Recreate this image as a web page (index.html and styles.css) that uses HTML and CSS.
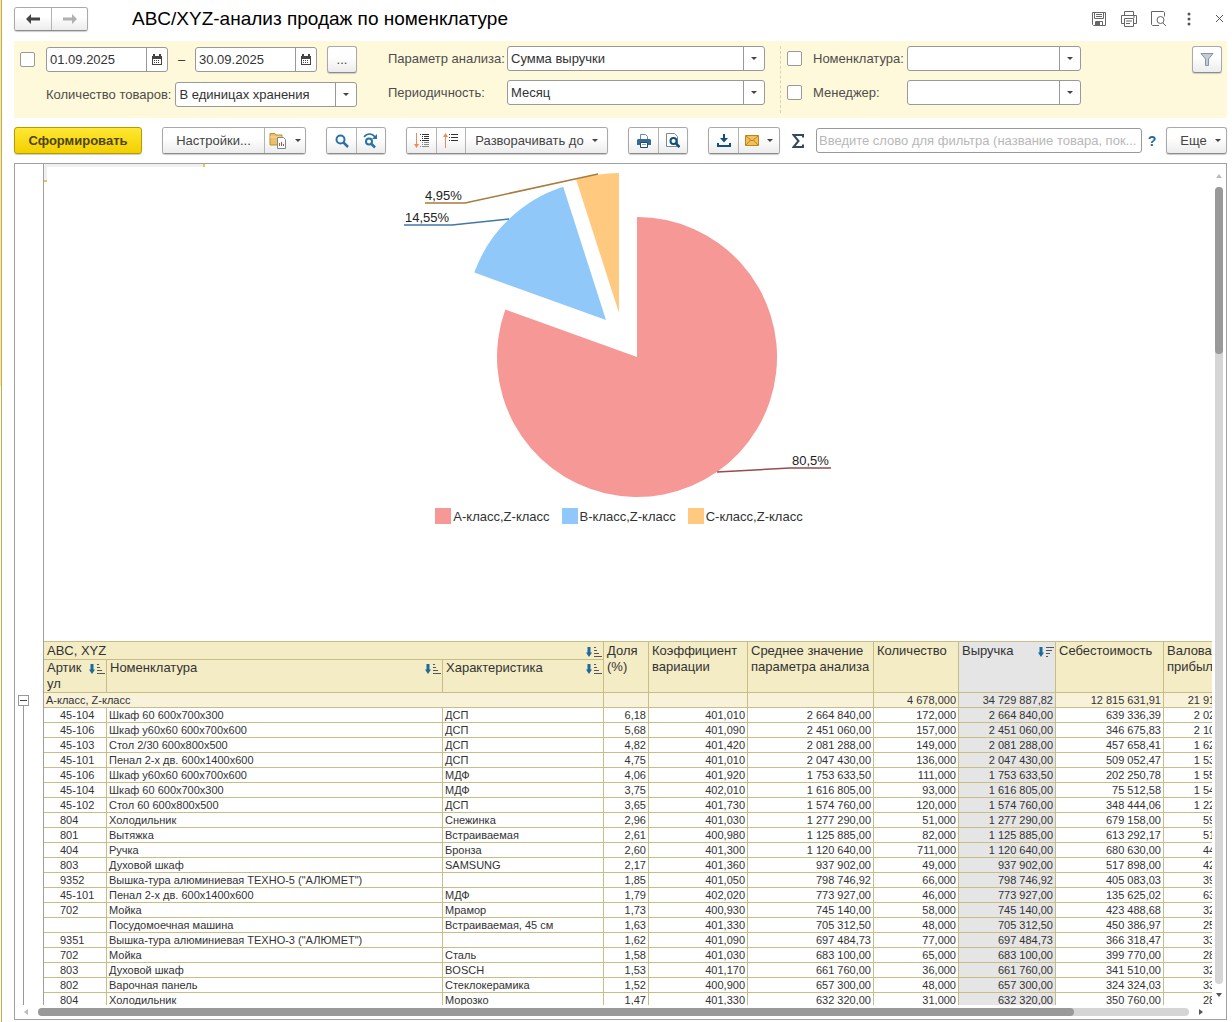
FILE: index.html
```html
<!DOCTYPE html>
<html lang="ru">
<head>
    <meta charset="UTF-8">
    <meta name="viewport" content="width=device-width, initial-scale=1.0">
    <title>ABC/XYZ-анализ продаж по номенклатуре</title>
    <link rel="stylesheet" href="styles.css">
</head>
<body>
    <!-- Значки сортировки, используются в шапке таблицы -->
    <svg class="defs" aria-hidden="true">
        <symbol id="sort-asc" viewBox="0 0 16 10">
            <path d="M1.500 0h3v5.500H6L3 10 0 5.500h1.500z" fill="#1c6a9c"/>
            <path d="M8 0.5h2M8 3.5h3M8 6.5h5M8 9.5h8" stroke="#555"/>
        </symbol>
        <symbol id="sort-desc" viewBox="0 0 16 10">
            <path d="M1.500 0h3v5.500H6L3 10 0 5.500h1.500z" fill="#1c6a9c"/>
            <path d="M8 0.5h8M8 3.5h6M8 6.5h4M8 9.5h2" stroke="#555"/>
        </symbol>
    </svg>

    <div class="side"></div>

    <main class="window">
        <header class="title-bar">
            <div class="group nav">
                <button class="btn" aria-label="Назад">
                    <svg width="14" height="10"><path d="M5 0v3.500h9v3H5V10L0 5z" fill="#444"/></svg>
                </button>
                <button class="btn" aria-label="Вперед">
                    <svg width="14" height="10"><path d="M9 0v3.500H0v3h9V10l5-5z" fill="#b0b0b0"/></svg>
                </button>
            </div>
            <h1>ABC/XYZ-анализ продаж по номенклатуре</h1>
            <div class="window-tools">
                <button aria-label="Сохранить">
                    <svg width="16" height="16" fill="none" stroke="#666"><path d="M1.500 1.500h13v13h-12l-1-1zM3.500 1.500v6h9v-6M5 3.500h6M5 5.500h6M4.500 14.500v-4h7v4"/><path d="M5 11h4v3H5z" fill="#666" stroke="none"/></svg>
                </button>
                <button aria-label="Печать">
                    <svg width="16" height="16" fill="none" stroke="#666"><path d="M3.500 4.500v-4h9v4M3.500 12.500h-3v-8h15v8h-3M3.500 7.500h9v8h-9zM5 10h6M5 12.500h4M12 6h2"/></svg>
                </button>
                <button aria-label="Просмотр">
                    <svg width="16" height="16" fill="none" stroke="#666"><path d="M8 14.500H1.500l-1-1V.5h12l1 1v4M12 12l3 3"/><circle cx="9.500" cy="9" r="3.500"/></svg>
                </button>
                <button aria-label="Меню">
                    <svg width="16" height="16" fill="#555"><circle cx="8" cy="3" r="1.500"/><circle cx="8" cy="8" r="1.500"/><circle cx="8" cy="13" r="1.500"/></svg>
                </button>
                <button aria-label="Закрыть">
                    <svg width="16" height="16" stroke="#555"><path d="M5 4l7 7M12 4l-7 7"/></svg>
                </button>
            </div>
        </header>

        <!-- Быстрые отборы -->
        <section class="filters">
            <div class="filter-col period">
                <div class="row">
                    <input type="checkbox" aria-label="Период">
                    <div class="field date">
                        <input type="text" value="01.09.2025" aria-label="Начало периода">
                        <button class="drop" aria-label="Выбрать дату">
                            <svg width="10" height="11"><path d="M0 2h10v9H0z" fill="#444"/><path d="M1 5h8v5H1z" fill="#fff"/><path d="M2 0v2M8 0v2" stroke="#444" stroke-width="2"/><path d="M2 6.500h1m1 0h1m1 0h1M2 8.500h1m1 0h1m1 0h1" stroke="#444"/></svg>
                        </button>
                    </div>
                    <span class="dash">–</span>
                    <div class="field date">
                        <input type="text" value="30.09.2025" aria-label="Конец периода">
                        <button class="drop" aria-label="Выбрать дату">
                            <svg width="10" height="11"><path d="M0 2h10v9H0z" fill="#444"/><path d="M1 5h8v5H1z" fill="#fff"/><path d="M2 0v2M8 0v2" stroke="#444" stroke-width="2"/><path d="M2 6.500h1m1 0h1m1 0h1M2 8.500h1m1 0h1m1 0h1" stroke="#444"/></svg>
                        </button>
                    </div>
                    <button class="btn single more">...</button>
                </div>
                <div class="row units">
                    <label for="units">Количество товаров:</label>
                    <div class="field">
                        <select id="units"><option>В единицах хранения</option></select>
                        <span class="drop"><i class="caret"></i></span>
                    </div>
                </div>
            </div>

            <div class="filter-col params">
                <div class="row">
                    <label for="param">Параметр анализа:</label>
                    <div class="field">
                        <select id="param"><option>Сумма выручки</option></select>
                        <span class="drop"><i class="caret"></i></span>
                    </div>
                </div>
                <div class="row">
                    <label for="step">Периодичность:</label>
                    <div class="field">
                        <select id="step"><option>Месяц</option></select>
                        <span class="drop"><i class="caret"></i></span>
                    </div>
                </div>
            </div>

            <div class="filter-col refs">
                <div class="row">
                    <input type="checkbox" id="use-item">
                    <label for="use-item">Номенклатура:</label>
                    <div class="field">
                        <select aria-label="Номенклатура"><option></option></select>
                        <span class="drop"><i class="caret"></i></span>
                    </div>
                </div>
                <div class="row">
                    <input type="checkbox" id="use-manager">
                    <label for="use-manager">Менеджер:</label>
                    <div class="field">
                        <select aria-label="Менеджер"><option></option></select>
                        <span class="drop"><i class="caret"></i></span>
                    </div>
                </div>
            </div>

            <button class="btn single funnel" aria-label="Отбор">
                <svg width="14" height="13"><path d="M1 .5h12L8.500 6v6.500h-3V6z" fill="#c3ccd4" stroke="#8496a5"/></svg>
            </button>
        </section>

        <!-- Командная панель -->
        <section class="toolbar">
            <button class="btn single run">Сформировать</button>

            <div class="group">
                <button class="btn settings">Настройки...</button>
                <button class="btn variants" aria-label="Варианты">
                    <svg width="18" height="17"><path d="M1 3V1.500h5L7 3h6v10H1z" fill="#ecc068" stroke="#c08d30"/><path d="M1 5h12" stroke="#f8dfa0"/><path d="M8.500 5.500h6l2 2v9h-8z" fill="#fff" stroke="#7a8894"/><path d="M10.500 14v-3" stroke="#3a9a4a"/><path d="M12.500 14v-4" stroke="#d04030"/><path d="M14.500 14v-2" stroke="#d04030"/></svg>
                    <i class="caret"></i>
                </button>
            </div>

            <div class="group">
                <button class="btn icon" aria-label="Найти">
                    <svg width="14" height="14" fill="none" stroke="#2a72a4"><circle cx="5.500" cy="5.500" r="4" stroke-width="2"/><path d="M8.500 8.500l4.500 4.500" stroke-width="2.500"/></svg>
                </button>
                <button class="btn icon" aria-label="Найти далее">
                    <svg width="16" height="16" fill="none" stroke="#2a72a4"><circle cx="6" cy="8.500" r="3" stroke-width="2"/><path d="M8.500 11l3.500 3.500" stroke-width="2.500"/><path d="M1 4c3-4 8-4 11 0" stroke-width="1.500"/><path d="M14 1v5H9z" fill="#2a72a4" stroke="none"/></svg>
                </button>
            </div>

            <div class="group">
                <button class="btn icon" aria-label="Развернуть">
                    <svg width="16" height="16" fill="none"><path d="M2.500 0v13" stroke="#ed8a5c"/><path d="M0 11h5l-2.500 4z" fill="#ed8a5c"/><path d="M6 1.500h1m1 0h7M8 3.500h1m1 0h5M8 5.500h1m1 0h5M6 7.500h1m1 0h7" stroke="#333"/><path d="M8 9.500h1m1 0h5M8 11.500h1m1 0h5M6 13.500h1m1 0h7" stroke="#888"/></svg>
                </button>
                <button class="btn icon" aria-label="Свернуть">
                    <svg width="16" height="16" fill="none"><path d="M2.500 2v13" stroke="#ed8a5c"/><path d="M0 4h5L2.500 0z" fill="#ed8a5c"/><path d="M6 1.500h1m1 0h7M6 4.500h1m1 0h7M6 7.500h1m1 0h7" stroke="#333"/></svg>
                </button>
                <button class="btn expand">Разворачивать до <i class="caret"></i></button>
            </div>

            <div class="group">
                <button class="btn icon" aria-label="Печать">
                    <svg width="14" height="14"><path d="M3.500.5h5l2 2V6h-7z" fill="#fff" stroke="#6d8aa4"/><path d="M1 5h12l1 1v5H0V6z" fill="#356a98"/><path d="M3.500 8.500h7v5h-7z" fill="#fff" stroke="#24496c"/><path d="M5 10.500h4" stroke="#8aa"/></svg>
                </button>
                <button class="btn icon" aria-label="Предварительный просмотр">
                    <svg width="14" height="15" fill="none"><path d="M.5.5h8l3 3v10H.5z" fill="#fff" stroke="#7a8894"/><circle cx="7.500" cy="8" r="3" stroke="#12507c" stroke-width="2"/><path d="M10 10.500l3.500 3.500" stroke="#12507c" stroke-width="2.500"/></svg>
                </button>
            </div>

            <div class="group">
                <button class="btn icon" aria-label="Сохранить в файл">
                    <svg width="14" height="13" fill="none"><path d="M7 0v6" stroke="#12507c" stroke-width="2"/><path d="M3 4h8L7 8.500z" fill="#12507c"/><path d="M1 9v3h12V9" stroke="#12507c" stroke-width="2"/></svg>
                </button>
                <button class="btn mail" aria-label="Отправить">
                    <svg width="14" height="11"><path d="M.5.5h13v10H.5z" fill="#f2c05c" stroke="#bd8420"/><path d="M1 1l6 5 6-5M1 10l4.500-5M13 10L8.500 5" fill="none" stroke="#bd8420"/></svg>
                    <i class="caret"></i>
                </button>
            </div>

            <button class="plain sum" aria-label="Сумма">
                <svg width="12" height="14"><path d="M11 3.500V1H1.500l5 6-5 6H11v-2.500" fill="none" stroke="#344a5e" stroke-width="2"/></svg>
            </button>
            <input type="text" class="search" aria-label="Фильтр" placeholder="Введите слово для фильтра (название товара, пок...">
            <button class="plain help">?</button>
            <button class="btn single else">Еще <i class="caret"></i></button>
        </section>

        <!-- Табличный документ -->
        <section class="report">
            <div class="gutter">
                <button aria-label="Свернуть группу"></button>
                <div class="gutter-line"></div>
            </div>

            <div class="sheet">
                <div class="cell-cursor"></div>
                <figure class="chart">
                    <svg width="1150" height="344" viewBox="0 0 1150 344">
                        <path d="M593 193V53A140 140 0 1 1 461.300 145.600z" fill="#f69896"/>
                        <path d="M562 156L430.300 108.600A140 140 0 0 1 519.200 22.700z" fill="#90c8fa"/>
                        <path d="M575 149L532.200 15.700A140 140 0 0 1 575 9z" fill="#ffc97f"/>
                        <path class="leader" d="M381 39h40l133-29" stroke="#a87c3c"/>
                        <path class="leader" d="M360 61h48l57-6" stroke="#4478a4"/>
                        <path class="leader" d="M673 308l73-4h41" stroke="#984c4c"/>
                        <text x="381" y="36">4,95%</text>
                        <text x="361" y="58">14,55%</text>
                        <text x="748" y="301">80,5%</text>
                    </svg>
                    <figcaption class="legend">
                        <span><i class="swatch a"></i>A-класс,Z-класс</span>
                        <span><i class="swatch b"></i>B-класс,Z-класс</span>
                        <span><i class="swatch c"></i>C-класс,Z-класс</span>
                    </figcaption>
                </figure>

                <table>
                    <colgroup>
                        <col class="w-code"><col class="w-name"><col class="w-prop"><col class="w-share"><col class="w-coef">
                        <col class="w-avg"><col class="w-qty"><col class="w-rev"><col class="w-cost"><col class="w-profit">
                    </colgroup>
                    <thead>
                        <tr class="head-top">
                            <th colspan="3"><div>ABC, XYZ<svg class="sort"><use href="#sort-asc"/></svg></div></th>
                            <th rowspan="2">Доля (%)</th>
                            <th rowspan="2">Коэффициент вариации</th>
                            <th rowspan="2">Среднее значение параметра анализа</th>
                            <th rowspan="2">Количество</th>
                            <th rowspan="2" class="sorted"><div>Выручка<svg class="sort"><use href="#sort-desc"/></svg></div></th>
                            <th rowspan="2">Себестоимость</th>
                            <th rowspan="2">Валовая<br>прибыль</th>
                        </tr>
                        <tr class="head-sub">
                            <th><div><span class="code-title">Артикул</span><svg class="sort"><use href="#sort-asc"/></svg></div></th>
                            <th><div>Номенклатура<svg class="sort"><use href="#sort-asc"/></svg></div></th>
                            <th><div>Характеристика<svg class="sort"><use href="#sort-asc"/></svg></div></th>
                        </tr>
                    </thead>
                    <tbody>
                        <tr class="total"><td colspan="3">A-класс, Z-класс</td><td></td><td></td><td></td><td>4 678,000</td><td>34 729 887,82</td><td>12 815 631,91</td><td>21 914 255,91</td></tr>
                        <tr><td>45-104</td><td>Шкаф 60 600х700х300</td><td>ДСП</td><td>6,18</td><td>401,010</td><td>2 664 840,00</td><td>172,000</td><td>2 664 840,00</td><td>639 336,39</td><td>2 025 503,61</td></tr>
                        <tr><td>45-106</td><td>Шкаф у60х60 600х700х600</td><td>ДСП</td><td>5,68</td><td>401,090</td><td>2 451 060,00</td><td>157,000</td><td>2 451 060,00</td><td>346 675,83</td><td>2 104 384,17</td></tr>
                        <tr><td>45-103</td><td>Стол 2/30 600х800х500</td><td>ДСП</td><td>4,82</td><td>401,420</td><td>2 081 288,00</td><td>149,000</td><td>2 081 288,00</td><td>457 658,41</td><td>1 623 629,59</td></tr>
                        <tr><td>45-101</td><td>Пенал 2-х дв. 600х1400х600</td><td>ДСП</td><td>4,75</td><td>401,010</td><td>2 047 430,00</td><td>136,000</td><td>2 047 430,00</td><td>509 052,47</td><td>1 538 377,53</td></tr>
                        <tr><td>45-106</td><td>Шкаф у60х60 600х700х600</td><td>МДФ</td><td>4,06</td><td>401,920</td><td>1 753 633,50</td><td>111,000</td><td>1 753 633,50</td><td>202 250,78</td><td>1 551 382,72</td></tr>
                        <tr><td>45-104</td><td>Шкаф 60 600х700х300</td><td>МДФ</td><td>3,75</td><td>402,010</td><td>1 616 805,00</td><td>93,000</td><td>1 616 805,00</td><td>75 512,58</td><td>1 541 292,42</td></tr>
                        <tr><td>45-102</td><td>Стол 60 600х800х500</td><td>ДСП</td><td>3,65</td><td>401,730</td><td>1 574 760,00</td><td>120,000</td><td>1 574 760,00</td><td>348 444,06</td><td>1 226 315,94</td></tr>
                        <tr><td>804</td><td>Холодильник</td><td>Снежинка</td><td>2,96</td><td>401,030</td><td>1 277 290,00</td><td>51,000</td><td>1 277 290,00</td><td>679 158,00</td><td>598 132,00</td></tr>
                        <tr><td>801</td><td>Вытяжка</td><td>Встраиваемая</td><td>2,61</td><td>400,980</td><td>1 125 885,00</td><td>82,000</td><td>1 125 885,00</td><td>613 292,17</td><td>512 592,83</td></tr>
                        <tr><td>404</td><td>Ручка</td><td>Бронза</td><td>2,60</td><td>401,300</td><td>1 120 640,00</td><td>711,000</td><td>1 120 640,00</td><td>680 630,00</td><td>440 010,00</td></tr>
                        <tr><td>803</td><td>Духовой шкаф</td><td>SAMSUNG</td><td>2,17</td><td>401,360</td><td>937 902,00</td><td>49,000</td><td>937 902,00</td><td>517 898,00</td><td>420 004,00</td></tr>
                        <tr><td>9352</td><td>Вышка-тура алюминиевая ТЕХНО-5 ("АЛЮМЕТ")</td><td></td><td>1,85</td><td>401,050</td><td>798 746,92</td><td>66,000</td><td>798 746,92</td><td>405 083,03</td><td>393 663,89</td></tr>
                        <tr><td>45-101</td><td>Пенал 2-х дв. 600х1400х600</td><td>МДФ</td><td>1,79</td><td>402,020</td><td>773 927,00</td><td>46,000</td><td>773 927,00</td><td>135 625,02</td><td>638 301,98</td></tr>
                        <tr><td>702</td><td>Мойка</td><td>Мрамор</td><td>1,73</td><td>400,930</td><td>745 140,00</td><td>58,000</td><td>745 140,00</td><td>423 488,68</td><td>321 651,32</td></tr>
                        <tr><td></td><td>Посудомоечная машина</td><td>Встраиваемая, 45 см</td><td>1,63</td><td>401,330</td><td>705 312,50</td><td>48,000</td><td>705 312,50</td><td>450 386,97</td><td>254 925,53</td></tr>
                        <tr><td>9351</td><td>Вышка-тура алюминиевая ТЕХНО-3 ("АЛЮМЕТ")</td><td></td><td>1,62</td><td>401,090</td><td>697 484,73</td><td>77,000</td><td>697 484,73</td><td>366 318,47</td><td>331 166,26</td></tr>
                        <tr><td>702</td><td>Мойка</td><td>Сталь</td><td>1,58</td><td>401,030</td><td>683 100,00</td><td>65,000</td><td>683 100,00</td><td>399 770,00</td><td>283 330,00</td></tr>
                        <tr><td>803</td><td>Духовой шкаф</td><td>BOSCH</td><td>1,53</td><td>401,170</td><td>661 760,00</td><td>36,000</td><td>661 760,00</td><td>341 510,00</td><td>320 250,00</td></tr>
                        <tr><td>802</td><td>Варочная панель</td><td>Стеклокерамика</td><td>1,52</td><td>400,900</td><td>657 300,00</td><td>48,000</td><td>657 300,00</td><td>324 324,03</td><td>332 975,97</td></tr>
                        <tr><td>804</td><td>Холодильник</td><td>Морозко</td><td>1,47</td><td>401,330</td><td>632 320,00</td><td>31,000</td><td>632 320,00</td><td>350 760,00</td><td>281 560,00</td></tr>
                    </tbody>
                </table>
            </div>

            <div class="scroll-y">
                <i class="arrow up"></i>
                <div class="track"><div class="thumb"></div></div>
                <i class="arrow down"></i>
            </div>
            <div class="scroll-x">
                <i class="arrow left"></i>
                <div class="track"><div class="thumb"></div></div>
                <i class="arrow right"></i>
            </div>
        </section>
    </main>
</body>
</html>
```
FILE: styles.css
```css
* {
    box-sizing: border-box;
}

body {
    display: flex;
    height: 100vh;
    margin: 0;
    background: #fff;
    color: #333;
    font-family: "Liberation Sans", Arial, sans-serif;
    font-size: 13px;
    overflow: hidden;
}

button,
input,
select {
    margin: 0;
    padding: 0;
    border: 0;
    background: none;
    color: inherit;
    font: inherit;
}

.defs {
    position: absolute;
    width: 0;
    height: 0;
}

.side {
    flex: none;
    width: 2px;
    border-right: 1px solid #b9ac68;
    background: linear-gradient(#fbe98c 386px, #fdf8d6 386px);
}

.window {
    display: flex;
    flex: 1;
    flex-direction: column;
    min-width: 0;
    padding: 0 5px 2px 12px;
}

/* Buttons */
.btn {
    display: flex;
    align-items: center;
    justify-content: center;
    gap: 8px;
    height: 25px;
    background: linear-gradient(#fff 40%, #ececec);
    color: #444;
    white-space: nowrap;
}

.group {
    display: flex;
    flex: none;
    border: 1px solid #a9a9a9;
    border-bottom-color: #8c8c8c;
    border-radius: 3px;
    box-shadow: 0 1px 1px #ccc;
    overflow: hidden;
}

.group .btn + .btn {
    border-left: 1px solid #b4b4b4;
}

.single {
    flex: none;
    height: 27px;
    border: 1px solid #a9a9a9;
    border-bottom-color: #8c8c8c;
    border-radius: 3px;
    box-shadow: 0 1px 1px #ccc;
}

.caret {
    width: 0;
    border: 3px solid transparent;
    border-top-color: #444;
    border-bottom: 0;
}

/* Title */
.title-bar {
    display: flex;
    align-items: center;
    height: 41px;
    padding-bottom: 3px;
}

.nav .btn {
    width: 36px;
    height: 22px;
}

h1 {
    flex: 1;
    margin: 0 0 0 44px;
    color: #000;
    font-size: 19px;
    font-weight: normal;
}

.window-tools {
    display: flex;
    gap: 14px;
}

.window-tools button {
    width: 16px;
    height: 16px;
}

.window-tools svg {
    display: block;
}

/* Filters */
.filters {
    display: flex;
    align-items: flex-start;
    height: 77px;
    padding: 5px 5px 0 6px;
    background: #fff9db;
}

.filter-col {
    display: flex;
    flex: none;
    flex-direction: column;
    gap: 9px;
}

.period {
    width: 337px;
    gap: 8px;
}

.row {
    display: flex;
    align-items: center;
    height: 25px;
}

.period .row {
    height: 27px;
}

.units {
    padding-left: 26px;
}

.units .field {
    flex: 1;
    margin-left: 4px;
}

input[type="checkbox"] {
    appearance: none;
    width: 15px;
    height: 15px;
    margin-right: 11px;
    border: 1px solid #999;
    border-radius: 2px;
    background: #fff;
}

label {
    color: #4d4d4d;
    white-space: nowrap;
}

.field {
    display: flex;
    height: 25px;
    border: 1px solid #999;
    border-radius: 3px;
    background: #fff;
}

.field input,
.field select {
    flex: 1;
    min-width: 0;
    padding: 0 3px;
    appearance: none;
    outline: 0;
}

.date {
    width: 122px;
}

.drop {
    display: flex;
    flex: none;
    align-items: center;
    justify-content: center;
    width: 21px;
    border-left: 1px solid #999;
}

.dash {
    width: 27px;
    text-align: center;
}

.more {
    width: 30px;
    margin-left: auto;
}

.params {
    width: 393px;
    margin-left: 31px;
    padding-right: 15px;
    padding-bottom: 8px;
    border-right: 1px dashed #d8d2b8;
}

.params label {
    width: 119px;
}

.params .field {
    flex: 1;
}

.refs {
    margin-left: 6px;
}

.refs label {
    width: 94px;
}

.refs .field {
    width: 174px;
}

.funnel {
    width: 30px;
    margin-left: auto;
}

/* Toolbar */
.toolbar {
    display: flex;
    align-items: center;
    height: 45px;
}

.toolbar .group {
    margin-left: 20px;
}

.run {
    width: 128px;
    border-color: #b39b00;
    background: linear-gradient(#ffe733, #f2cf00);
    color: #4d4415;
    font-weight: bold;
}

.settings {
    width: 101px;
}

.variants {
    width: 41px;
}

.icon {
    width: 29px;
}

.expand {
    width: 142px;
}

.mail {
    width: 41px;
}

.plain {
    flex: none;
    height: 25px;
}

.sum {
    width: 36px;
}

.sum svg {
    display: block;
    margin: auto;
}

.search {
    flex: 1;
    min-width: 0;
    height: 25px;
    padding: 0 0 0 2px;
    border: 1px solid #999;
    border-radius: 3px;
    text-overflow: ellipsis;
}

.search::placeholder {
    color: #b8b8b8;
}

.help {
    width: 24px;
    padding-right: 4px;
    color: #1c6a9c;
    font-size: 14px;
    font-weight: bold;
}

.else {
    width: 61px;
    padding-left: 8px;
}

/* Report */
.report {
    display: grid;
    flex: 1;
    grid-template-columns: 29px 1fr 14px;
    grid-template-rows: minmax(0, 1fr) 14px;
    min-height: 0;
    border: 1px solid #a0a0a0;
}

.gutter {
    display: flex;
    flex-direction: column;
    min-height: 0;
    padding: 531px 0 0 3px;
    border-right: 1px solid #a0a0a0;
    overflow: hidden;
}

.gutter button {
    flex: none;
    width: 11px;
    height: 11px;
    border: 1px solid #999;
    background: linear-gradient(#444, #444) center / 7px 1px no-repeat;
}

.gutter-line {
    flex: 1;
    width: 6px;
    border-right: 1px solid #999;
}

.sheet {
    position: relative;
    min-width: 0;
    overflow: hidden;
}

.cell-cursor {
    position: absolute;
    top: 0;
    left: 0;
    width: 161px;
    height: 18px;
    border-top: 3px solid #f0f0f0;
    border-left: 3px solid #f0f0f0;
}

.cell-cursor::before,
.cell-cursor::after {
    content: "";
    position: absolute;
    background: #e8c84c;
}

.cell-cursor::before {
    top: -3px;
    right: 0;
    width: 2px;
    height: 3px;
}

.cell-cursor::after {
    bottom: 0;
    left: -3px;
    width: 3px;
    height: 2px;
}

/* Chart */
.chart {
    width: 1150px;
    height: 477px;
    margin: 0;
}

.chart svg {
    display: block;
}

.chart text {
    fill: #222;
    font-size: 13px;
}

.leader {
    fill: none;
    stroke-width: 1.5;
}

.legend {
    display: flex;
    justify-content: center;
    gap: 12px;
}

.legend span {
    display: flex;
    align-items: center;
    gap: 2px;
}

.swatch {
    width: 16px;
    height: 16px;
}

.swatch.a {
    background: #f69896;
}

.swatch.b {
    background: #90c8fa;
}

.swatch.c {
    background: #ffc97f;
}

/* Table */
table {
    width: 1217px;
    border-top: 1px solid #c8bd84;
    border-spacing: 0;
    table-layout: fixed;
    font-size: 11px;
}

.w-code { width: 63px; }
.w-name { width: 336px; }
.w-prop { width: 161px; }
.w-share { width: 45px; }
.w-coef { width: 99px; }
.w-avg { width: 126px; }
.w-qty { width: 85px; }
.w-rev { width: 97px; }
.w-cost { width: 108px; }
.w-profit { width: 97px; }

th,
td {
    padding: 0 2px;
    border-right: 1px solid #c8bd84;
    border-bottom: 1px solid #c8bd84;
}

th {
    padding: 1px 1px 0 3px;
    background: #f3ecc5;
    font-size: 13px;
    font-weight: normal;
    line-height: 16px;
    text-align: left;
    vertical-align: top;
}

th div {
    display: flex;
    justify-content: space-between;
}

.head-top {
    height: 18px;
}

.head-sub {
    height: 33px;
}

.head-sub th {
    padding-top: 0;
}

.code-title {
    width: 36px;
    word-break: break-all;
}

.sort {
    flex: none;
    width: 16px;
    height: 10px;
    margin-top: 4px;
}

td {
    height: 15px;
    line-height: 14px;
    text-align: right;
    white-space: nowrap;
}

td:nth-child(-n+3) {
    text-align: left;
}

td:first-child {
    padding-left: 16px;
}

.total td {
    background: #f8f2da;
    text-align: right;
}

.total td:first-child {
    padding-left: 2px;
    text-align: left;
}

th.sorted,
td:nth-child(8),
.total td:nth-child(6) {
    background: #e5e5e5;
}

.total td:nth-child(8) {
    background: #f8f2da;
}

/* Scrollbars */
.scroll-y {
    display: flex;
    flex-direction: column;
    align-items: center;
    padding: 10px 0 8px;
}

.scroll-y .track {
    flex: 1;
    width: 8px;
    margin: 9px 0 9px;
}

.scroll-x {
    display: flex;
    grid-column: 1 / -1;
    align-items: center;
    padding: 0 23px 0 9px;
}

.scroll-x .track {
    flex: 1;
    height: 8px;
    margin: 0 10px 0 10px;
}

.track {
    border-radius: 4px;
    background: #d5d5d5;
}

.thumb {
    border-radius: 4px;
    background: #999;
}

.scroll-y .thumb {
    height: 21%;
}

.scroll-x .thumb {
    width: 90%;
    height: 8px;
}

.arrow {
    border: 3px solid transparent;
}

.arrow.up {
    border-top: 0;
    border-bottom: 4px solid #bbb;
}

.arrow.down {
    border-top: 4px solid #555;
    border-bottom: 0;
}

.arrow.left {
    border-right: 4px solid #bbb;
    border-left: 0;
}

.arrow.right {
    border-right: 0;
    border-left: 4px solid #555;
}
```
